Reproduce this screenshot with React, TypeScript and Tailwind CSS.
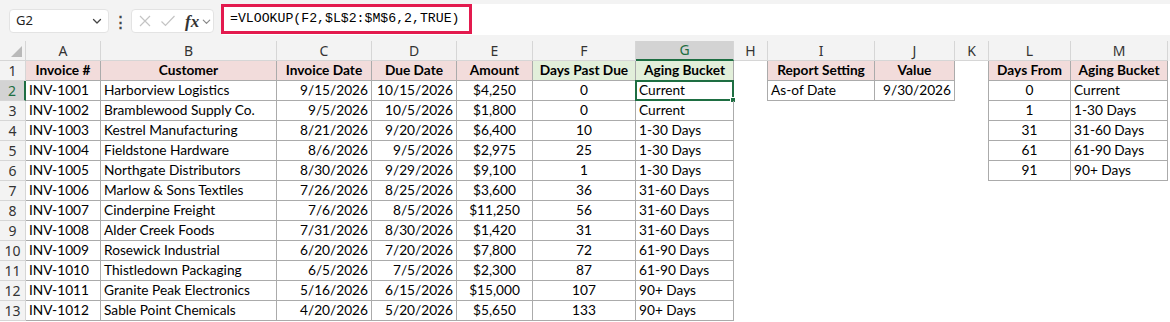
import React from 'react';

type Align = 'left' | 'center' | 'right';

type CellSpec = {
  text?: string;
  align?: Align;
  fill?: string;
  bold?: boolean;
  boxed?: boolean;
  edge?: boolean;
};

const letters = ['A', 'B', 'C', 'D', 'E', 'F', 'G', 'H', 'I', 'J', 'K', 'L', 'M'];

const invoices = [
  ['INV-1001', 'Harborview Logistics', '9/15/2026', '10/15/2026', '$4,250', '0', 'Current'],
  ['INV-1002', 'Bramblewood Supply Co.', '9/5/2026', '10/5/2026', '$1,800', '0', 'Current'],
  ['INV-1003', 'Kestrel Manufacturing', '8/21/2026', '9/20/2026', '$6,400', '10', '1-30 Days'],
  ['INV-1004', 'Fieldstone Hardware', '8/6/2026', '9/5/2026', '$2,975', '25', '1-30 Days'],
  ['INV-1005', 'Northgate Distributors', '8/30/2026', '9/29/2026', '$9,100', '1', '1-30 Days'],
  ['INV-1006', 'Marlow & Sons Textiles', '7/26/2026', '8/25/2026', '$3,600', '36', '31-60 Days'],
  ['INV-1007', 'Cinderpine Freight', '7/6/2026', '8/5/2026', '$11,250', '56', '31-60 Days'],
  ['INV-1008', 'Alder Creek Foods', '7/31/2026', '8/30/2026', '$1,420', '31', '31-60 Days'],
  ['INV-1009', 'Rosewick Industrial', '6/20/2026', '7/20/2026', '$7,800', '72', '61-90 Days'],
  ['INV-1010', 'Thistledown Packaging', '6/5/2026', '7/5/2026', '$2,300', '87', '61-90 Days'],
  ['INV-1011', 'Granite Peak Electronics', '5/16/2026', '6/15/2026', '$15,000', '107', '90+ Days'],
  ['INV-1012', 'Sable Point Chemicals', '4/20/2026', '5/20/2026', '$5,650', '133', '90+ Days'],
];

const mainHeader = ['Invoice #', 'Customer', 'Invoice Date', 'Due Date', 'Amount', 'Days Past Due', 'Aging Bucket'];
const mainAlign: Align[] = ['left', 'left', 'right', 'right', 'center', 'center', 'left'];

const lookup = [
  ['0', 'Current'],
  ['1', '1-30 Days'],
  ['31', '31-60 Days'],
  ['61', '61-90 Days'],
  ['91', '90+ Days'],
];

const PINK = 'bg-[#f2dcdb]';
const GREEN = 'bg-[#e2efda]';

function buildRow(r: number): CellSpec[] {
  const cells: CellSpec[] = [];
  // A..G
  for (let c = 0; c < 7; c++) {
    if (r === 0) {
      cells.push({ text: mainHeader[c], align: 'center', bold: true, boxed: true, fill: c >= 5 ? GREEN : PINK });
    } else {
      cells.push({ text: invoices[r - 1][c], align: mainAlign[c], boxed: true });
    }
  }
  // H
  cells.push({ edge: r <= 1 });
  // I, J
  if (r === 0) {
    cells.push({ text: 'Report Setting', align: 'center', bold: true, boxed: true, fill: PINK });
    cells.push({ text: 'Value', align: 'center', bold: true, boxed: true, fill: PINK });
  } else if (r === 1) {
    cells.push({ text: 'As-of Date', align: 'left', boxed: true });
    cells.push({ text: '9/30/2026', align: 'right', boxed: true });
  } else {
    cells.push({});
    cells.push({});
  }
  // K
  cells.push({ edge: r <= 5 });
  // L, M
  if (r === 0) {
    cells.push({ text: 'Days From', align: 'center', bold: true, boxed: true, fill: PINK });
    cells.push({ text: 'Aging Bucket', align: 'center', bold: true, boxed: true, fill: PINK });
  } else if (r <= 5) {
    cells.push({ text: lookup[r - 1][0], align: 'center', boxed: true });
    cells.push({ text: lookup[r - 1][1], align: 'left', boxed: true });
  } else {
    cells.push({});
    cells.push({});
  }
  return cells;
}

const alignClass: Record<Align, string> = {
  left: 'justify-start',
  center: 'justify-center',
  right: 'justify-end',
};

const Cell: React.FC<{ spec: CellSpec; selected?: boolean }> = ({ spec, selected }) => {
  const border = spec.boxed
    ? 'border-r border-b border-[#ababab]'
    : spec.edge
      ? 'border-r border-[#ababab]'
      : '';
  return (
    <div
      className={`relative flex h-5 items-end overflow-visible whitespace-nowrap px-[3px] pb-[1px] text-[13.7px] leading-[18px] text-black ${border} ${
        spec.fill ?? ''
      } ${alignClass[spec.align ?? 'left']} ${spec.bold ? 'font-bold' : ''}`}
    >
      {spec.text}
      {selected && (
        <div className="pointer-events-none absolute -top-[1px] -left-[1px] -right-[1px] -bottom-[1px] border-2 border-[#1e6e42]">
          <div className="absolute -right-[4px] -bottom-[4px] h-[6px] w-[6px] border border-white bg-[#1e6e42]" />
        </div>
      )}
    </div>
  );
};

const Chevron: React.FC<{ className?: string }> = ({ className }) => (
  <svg viewBox="0 0 12 12" className={className} fill="none" stroke="currentColor" strokeWidth="1.3">
    <path d="M2.5 4.5 6 8l3.5-3.5" strokeLinecap="round" strokeLinejoin="round" />
  </svg>
);

const App: React.FC = () => {
  const rows = Array.from({ length: 13 }, (_, i) => buildRow(i));
  const grid =
    'grid grid-cols-[26px_75px_176px_95px_85px_76px_103px_98px_34px_107px_80px_34px_82px_97px]';

  return (
    <div className="h-[322px] w-[1170px] overflow-hidden bg-white font-['Lato',sans-serif]">
      {/* formula bar */}
      <div className="flex h-[41px] items-start bg-[#f3f3f3] pt-[9px] pl-[9px] font-['Noto_Sans',sans-serif]">
        <div className="flex h-6 w-[100px] items-center justify-between rounded-[4px] border border-[#e3e3e3] bg-white pl-[6px] pr-[5px] text-[13px] text-[#222]">
          <span>G2</span>
          <Chevron className="h-3 w-3 text-[#444]" />
        </div>
        <div className="flex h-6 w-[22px] items-center justify-center text-[15px] font-bold text-[#444]">⋮</div>
        <div className="flex h-6 w-[83px] items-center rounded-[4px] border border-[#e3e3e3] bg-white pl-[6px] text-[#c4c4c4]">
          <svg viewBox="0 0 14 14" className="h-[14px] w-[14px]" fill="none" stroke="currentColor" strokeWidth="1.2">
            <path d="M2 2l10 10M12 2 2 12" />
          </svg>
          <svg viewBox="0 0 16 14" className="ml-[8px] h-[14px] w-[16px]" fill="none" stroke="currentColor" strokeWidth="1.2">
            <path d="M1.5 7.5 5.5 11.5 14.5 2" />
          </svg>
          <span className="ml-[9px] font-['Liberation_Serif',serif] text-[17px] font-bold italic leading-none text-[#333]">fx</span>
          <Chevron className="ml-[2px] h-[11px] w-[11px] text-[#888]" />
        </div>
        <div className="-mt-[5px] ml-[7px] flex h-[31px] flex-1 items-start rounded-l-[3px] bg-white pr-[6px]">
          <div className="flex h-[30px] w-[251px] items-center border-[3px] border-[#e31a4e] pl-[6px] font-['Liberation_Mono',monospace] text-[13.2px] text-black">
            =VLOOKUP(F2,$L$2:$M$6,2,TRUE)
          </div>
        </div>
      </div>

      {/* column headers */}
      <div className={`${grid} h-5 bg-[#f3f3f3] font-['Noto_Sans',sans-serif] text-[14px] text-[#333]`}>
        <div className="relative border-r border-b border-[#d6d6d6]">
          <svg viewBox="0 0 10 10" className="absolute right-[3px] bottom-[3px] h-[11px] w-[11px]">
            <path d="M10 0V10H0Z" fill="#b9b9b9" />
          </svg>
        </div>
        {letters.map((l) =>
          l === 'G' ? (
            <div
              key={l}
              className="flex items-center justify-center border-r border-b-2 border-r-[#d6d6d6] border-b-[#1e6e42] bg-[#d3d3d3] leading-none text-[#1e6e42]"
            >
              {l}
            </div>
          ) : (
            <div key={l} className="flex items-center justify-center border-r border-b border-[#d6d6d6] leading-none">
              {l}
            </div>
          ),
        )}
      </div>

      {/* rows */}
      {rows.map((cells, r) => (
        <div key={r} className={grid}>
          <div
            className={`flex h-5 items-center justify-center border-b border-[#d6d6d6] font-['Noto_Sans',sans-serif] text-[14px] leading-none ${
              r === 1
                ? 'border-r-2 border-r-[#1e6e42] bg-[#d3d3d3] text-[#1e6e42]'
                : 'border-r border-r-[#d6d6d6] bg-[#f3f3f3] text-[#333]'
            }`}
          >
            {r + 1}
          </div>
          {cells.map((spec, c) => (
            <Cell key={c} spec={spec} selected={r === 1 && c === 6} />
          ))}
        </div>
      ))}
    </div>
  );
};

export default App;
